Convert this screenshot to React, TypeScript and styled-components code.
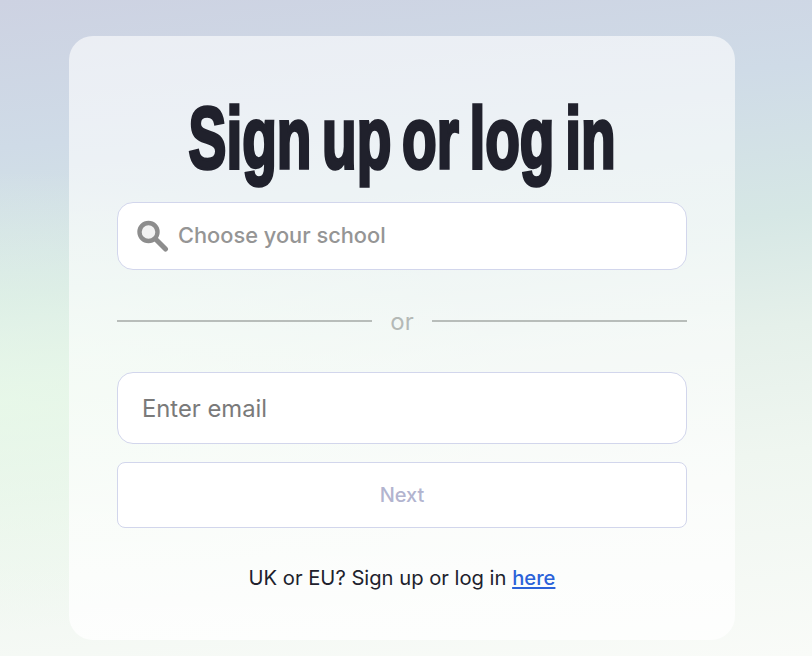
import React from 'react';
import styled, { createGlobalStyle } from 'styled-components';

const GlobalStyle = createGlobalStyle`
  html, body {
    margin: 0;
    height: 100%;
  }
  body {
    font-family: Inter, "Liberation Sans", sans-serif;
    overflow: hidden;
  }
`;

const Page = styled.main`
  box-sizing: border-box;
  width: 812px;
  height: 656px;
  padding: 36px 77px 16px 69px;
  background:
    radial-gradient(ellipse 520px 230px at 0 400px, rgba(232, 250, 232, 0.75), rgba(232, 250, 232, 0)),
    linear-gradient(174deg, #cdd2e2 0%, #cfdbe7 20%, #d6e7e5 40%, #e5f0ea 55%, #eff6f0 72%, #f9fbf8 100%);
`;

const Card = styled.section`
  box-sizing: border-box;
  width: 666px;
  height: 604px;
  padding: 64px 48px 0;
  border-radius: 24px;
  background: linear-gradient(180deg, rgba(255, 255, 255, 0.6) 0%, rgba(255, 255, 255, 0.6) 60%, rgba(255, 255, 255, 0.8) 100%);
`;

const TitleWrap = styled.div`
  display: flex;
  justify-content: center;
  height: 102px;
`;

const Title = styled.h1`
  margin: 0;
  font: 700 88px/76px "Liberation Sans", Arial, sans-serif;
  color: #20212c;
  white-space: nowrap;
  letter-spacing: 0;
  word-spacing: -8px;
  -webkit-text-stroke: 3.6px #20212c;
  transform: scaleX(0.645);
`;

const SchoolField = styled.label`
  box-sizing: border-box;
  display: flex;
  align-items: center;
  gap: 9px;
  height: 68px;
  padding: 0 19px;
  background: #fff;
  border: 1px solid #d2d6ec;
  border-radius: 16px;
`;

const SchoolInput = styled.input`
  flex: 1;
  min-width: 0;
  padding: 0 0 2px;
  border: 0;
  outline: 0;
  background: none;
  font: 500 21.8px/30px Inter, sans-serif;
  &::placeholder {
    color: #959595;
    opacity: 1;
  }
`;

const Divider = styled.div`
  display: flex;
  align-items: center;
  gap: 18px;
  height: 36px;
  margin: 33px 0;
  color: #b4b9b6;
  font: 400 24px/36px Inter, sans-serif;
  &::before,
  &::after {
    content: '';
    flex: 1;
    height: 2px;
    background: #b8bdba;
  }
`;

const DividerLabel = styled.span`
  padding-top: 2px;
`;

const EmailInput = styled.input`
  display: block;
  box-sizing: border-box;
  width: 100%;
  height: 72px;
  padding: 0 24px;
  background: #fff;
  border: 1px solid #d2d6ec;
  border-radius: 16px;
  outline: 0;
  font: 400 23.8px/30px Inter, sans-serif;
  &::placeholder {
    color: #7a7a7a;
    opacity: 1;
  }
`;

const NextButton = styled.button`
  display: block;
  width: 100%;
  height: 66px;
  margin-top: 18px;
  background: #fff;
  border: 1px solid #d2d6ec;
  border-radius: 8px;
  color: #b2b4cf;
  font: 500 20px/28px Inter, sans-serif;
`;

const Footer = styled.p`
  margin: 36px 0 0;
  text-align: center;
  color: #20212c;
  font: 400 20.2px/28px Inter, sans-serif;
`;

const FooterLink = styled.a`
  color: #2b62d9;
  font-weight: 500;
  text-decoration: underline;
`;

const SearchIcon = () => (
  <svg width="32" height="32" viewBox="0 0 32 32" fill="none" aria-hidden="true">
    <circle cx="11.5" cy="12" r="9" stroke="#8d8d8d" strokeWidth="4.4" fill="#f2f2f2" />
    <path d="M19 19.5L28.5 29" stroke="#8d8d8d" strokeWidth="5" strokeLinecap="round" />
  </svg>
);

export default function App() {
  return (
    <Page>
      <GlobalStyle />
      <Card>
        <TitleWrap>
          <Title>Sign up or log in</Title>
        </TitleWrap>
        <SchoolField>
          <SearchIcon />
          <SchoolInput placeholder="Choose your school" />
        </SchoolField>
        <Divider>
          <DividerLabel>or</DividerLabel>
        </Divider>
        <EmailInput placeholder="Enter email" />
        <NextButton type="button">Next</NextButton>
        <Footer>
          UK or EU? Sign up or log in <FooterLink href="#">here</FooterLink>
        </Footer>
      </Card>
    </Page>
  );
}
